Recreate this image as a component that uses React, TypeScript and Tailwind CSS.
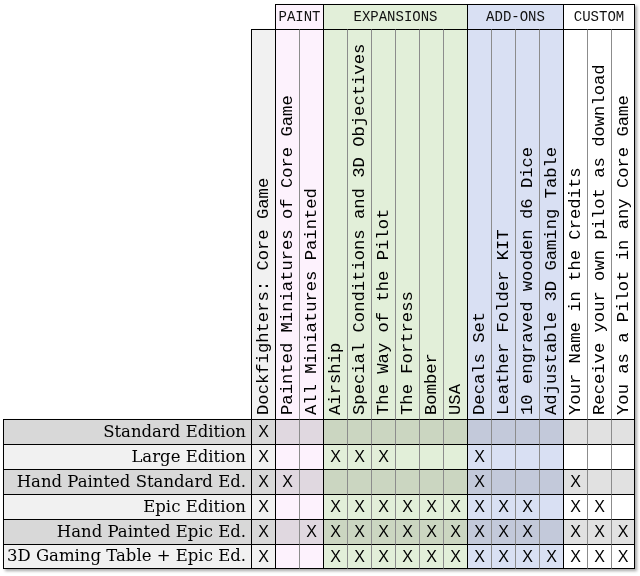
const columns = [
  "Dockfighters: Core Game",
  "Painted Miniatures of Core Game",
  "All Miniatures Painted",
  "Airship",
  "Special Conditions and 3D Objectives",
  "The Way of the Pilot",
  "The Fortress",
  "Bomber",
  "USA",
  "Decals Set",
  "Leather Folder KIT",
  "10 engraved wooden d6 Dice",
  "Adjustable 3D Gaming Table",
  "Your Name in the Credits",
  "Receive your own pilot as download",
  "You as a Pilot in any Core Game",
];

// group of each column: 0 core, 1 paint, 2 expansions, 3 add-ons, 4 custom
const groupOf = [0, 1, 1, 2, 2, 2, 2, 2, 2, 3, 3, 3, 3, 4, 4, 4];
const groupStart = [0, 1, 3, 9, 13];

const lightBg = ["bg-[#f1f1f1]", "bg-[#fdf2fd]", "bg-[#e2efd9]", "bg-[#d9e0f3]", "bg-white"];
const darkBg = ["bg-[#d8d8d8]", "bg-[#e0d8e0]", "bg-[#cbd6c1]", "bg-[#c3c9da]", "bg-[#e1e1e1]"];

const rows = [
  { label: "Standard Edition", x: [0] },
  { label: "Large Edition", x: [0, 3, 4, 5, 9] },
  { label: "Hand Painted Standard Ed.", x: [0, 1, 9, 13] },
  { label: "Epic Edition", x: [0, 3, 4, 5, 6, 7, 8, 9, 10, 11, 13, 14] },
  { label: "Hand Painted Epic Ed.", x: [0, 2, 3, 4, 5, 6, 7, 8, 9, 10, 11, 13, 14, 15] },
  { label: "3D Gaming Table + Epic Ed.", x: [0, 3, 4, 5, 6, 7, 8, 9, 10, 11, 12, 13, 14, 15] },
];

const groups = [
  { name: "PAINT", span: "col-span-2", bg: "bg-[#fdf2fd]" },
  { name: "EXPANSIONS", span: "col-span-6", bg: "bg-[#e2efd9]" },
  { name: "ADD-ONS", span: "col-span-4", bg: "bg-[#d9e0f3]" },
  { name: "CUSTOM", span: "col-span-3", bg: "bg-white" },
];

const mono = "font-['Liberation_Mono','Courier_New',monospace]";

export default function App() {
  const leftBorder = (i: number) =>
    groupStart.includes(i) ? "border-l-black" : "border-l-[#8c8c8c]";

  return (
    <div className="w-[640px] h-[576px] bg-white pl-[3px] pt-[4px]">
      <div className="grid grid-cols-[248px_repeat(16,24px)] grid-rows-[25px_390px_repeat(6,25px)] w-fit drop-shadow-[2px_2px_1.5px_rgba(0,0,0,0.35)]">
        {/* group headers */}
        <div className="col-span-2" />
        {groups.map((g, i) => (
          <div
            key={g.name}
            className={`${g.span} ${g.bg} border-t border-l border-black ${i === groups.length - 1 ? "border-r" : ""} flex items-center justify-center text-[14px] text-[#111] ${mono}`}
          >
            {g.name}
          </div>
        ))}

        {/* column headers */}
        <div />
        {columns.map((c, i) => (
          <div
            key={c}
            className={`${lightBg[groupOf[i]]} border-t border-t-black border-l ${leftBorder(i)} ${i === 15 ? "border-r border-r-black" : ""} flex justify-center pb-[4px]`}
          >
            <div className={`[writing-mode:vertical-rl] rotate-180 text-[17.2px] leading-[23px] text-black whitespace-nowrap ${mono}`}>
              {c}
            </div>
          </div>
        ))}

        {/* body rows */}
        {rows.map((r, ri) => {
          const dark = ri % 2 === 0;
          const last = ri === rows.length - 1;
          return [
            <div
              key={r.label}
              className={`${dark ? "bg-[#d8d8d8]" : "bg-[#f1f1f1]"} border-t border-l border-black ${last ? "border-b" : ""} flex items-center justify-end pr-[5px] text-[16.5px] text-black font-['DejaVu_Serif',serif] whitespace-nowrap`}
            >
              {r.label}
            </div>,
            ...columns.map((_, ci) => (
              <div
                key={r.label + ci}
                className={`${dark ? darkBg[groupOf[ci]] : lightBg[groupOf[ci]]} border-t border-t-black border-l ${leftBorder(ci)} ${ci === 15 ? "border-r border-r-black" : ""} ${last ? "border-b border-b-black" : ""} flex items-center justify-center text-[16px] text-black font-['Liberation_Sans',Arial,sans-serif]`}
              >
                {r.x.includes(ci) ? "X" : ""}
              </div>
            )),
          ];
        })}
      </div>
    </div>
  );
}
